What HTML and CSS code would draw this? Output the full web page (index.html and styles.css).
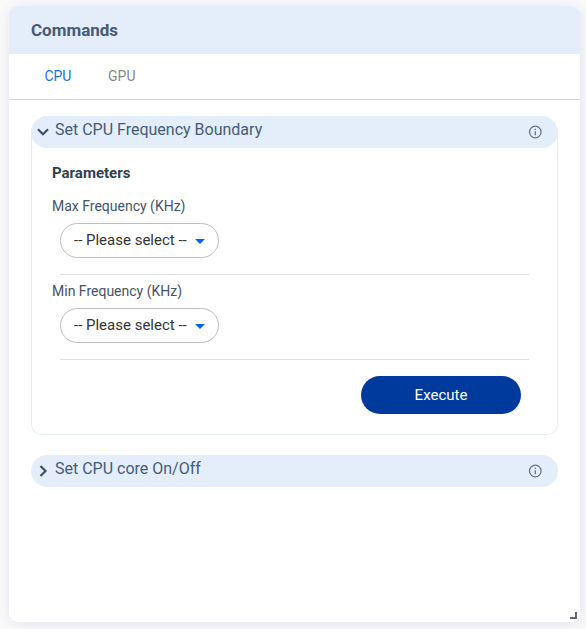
FILE: index.html
```html
<!DOCTYPE html>
<html lang="en">
<head>
<meta charset="utf-8">
<title>Commands</title>
<link rel="stylesheet" href="styles.css">
</head>
<body>
<section class="card">
  <header class="card-header">Commands</header>
  <nav class="tabs"><a class="tab active">CPU</a><a class="tab">GPU</a></nav>
  <main class="content">
    <article class="command open">
      <div class="command-header">
        <svg class="chevron" viewBox="0 0 14 14"><path d="M2 4.3 7 9.3 12 4.3"/></svg>
        <span class="command-title">Set CPU Frequency Boundary</span>
        <svg class="info" viewBox="0 0 14 14"><circle cx="7.3" cy="7" r="5.8"/><path d="M7.3 6.2V10.2M7.3 3.8V5"/></svg>
      </div>
      <div class="command-body">
        <h3 class="params-title">Parameters</h3>
        <div class="param">
          <label class="param-label">Max Frequency (KHz)</label>
          <div class="select"><span>-- Please select --</span><i class="caret"></i></div>
        </div>
        <div class="param">
          <label class="param-label">Min Frequency (KHz)</label>
          <div class="select"><span>-- Please select --</span><i class="caret"></i></div>
        </div>
        <button class="execute">Execute</button>
      </div>
    </article>
    <article class="command">
      <div class="command-header">
        <svg class="chevron" viewBox="0 0 14 14"><path d="M4.5 2 9.5 7 4.5 12"/></svg>
        <span class="command-title">Set CPU core On/Off</span>
        <svg class="info" viewBox="0 0 14 14"><circle cx="7.3" cy="7" r="5.8"/><path d="M7.3 6.2V10.2M7.3 3.8V5"/></svg>
      </div>
    </article>
  </main>
  <span class="resize-handle"></span>
</section>
</body>
</html>
```
FILE: styles.css
```css
* { box-sizing: border-box; }
body {
  margin: 0;
  height: 629px;
  padding: 6px 6px 7px 9px;
  overflow: hidden;
  background: #fafafa;
  font-family: Roboto, "Liberation Sans", sans-serif;
  color: #455b75;
}
.card {
  position: relative;
  height: 616px;
  border-radius: 9px;
  overflow: hidden;
  background: #fff;
  box-shadow: 1px 2px 14px rgba(60, 50, 150, 0.12);
}
.card-header {
  height: 48px;
  padding-left: 22px;
  background: #e4eefb;
  font-size: 17px;
  font-weight: 700;
  line-height: 48px;
}
.tabs {
  display: flex;
  gap: 36.6px;
  height: 46px;
  padding-left: 35.4px;
  border-bottom: 1px solid #d6d6d6;
  font-size: 14px;
  line-height: 45px;
}
.tab { color: #888; }
.tab.active { color: #1a6fe8; }
.content {
  display: flex;
  flex-direction: column;
  gap: 20px;
  padding: 16px 22px 0;
}
.command-header {
  display: flex;
  align-items: center;
  height: 32px;
  padding: 0 16px 0 5px;
  border-radius: 16px;
  background: #e4eefb;
}
.command.open {
  height: 319px;
  border-radius: 10px;
  box-shadow: inset 0 0 0 1px #e4eefb;
  clip-path: inset(0 round 16px 16px 10px 10px);
}
.chevron {
  width: 14px;
  height: 14px;
  fill: none;
  stroke: #3f526c;
  stroke-width: 2.2;
}
.command-title {
  flex: 1;
  margin-left: 5px;
  font-size: 16px;
  line-height: 20px;
  padding-bottom: 5px;
}
.info {
  width: 14px;
  height: 14px;
  fill: none;
  stroke: #656f84;
  stroke-width: 1.25;
}
.command-body {
  display: flex;
  flex-direction: column;
  padding: 15px 29px 0 21px;
}
.params-title {
  margin: 0 0 13px;
  color: #2f3f50;
  font-size: 15px;
  font-weight: 700;
  line-height: 20px;
}
.param {
  position: relative;
  height: 85px;
}
.param-label {
  display: block;
  height: 27px;
  color: #465364;
  font-size: 14px;
  line-height: 20px;
}
.param::after {
  content: "";
  display: block;
  height: 1px;
  margin: 16px 0 0 8px;
  background: #ddd;
}
.select {
  display: flex;
  align-items: center;
  justify-content: space-between;
  width: 159px;
  height: 35px;
  margin-left: 8px;
  padding: 0 13px 1px;
  border: 1px solid #bdbdbd;
  border-radius: 18px;
  color: #333;
  font-size: 15px;
}
.caret {
  margin-top: 3px;
  border: 5px solid transparent;
  border-top-color: #0764e9;
  border-bottom: 0;
}
.execute {
  align-self: flex-end;
  width: 160px;
  height: 38px;
  margin: 10px 8px 0 0;
  padding: 0;
  border: 0;
  border-radius: 19px;
  background: #003a9d;
  color: #fff;
  font: 400 15px Roboto, sans-serif;
}
.resize-handle {
  position: absolute;
  right: 3px;
  bottom: 3px;
  width: 7px;
  height: 7px;
  border: solid #666;
  border-width: 0 2px 2px 0;
}
```
